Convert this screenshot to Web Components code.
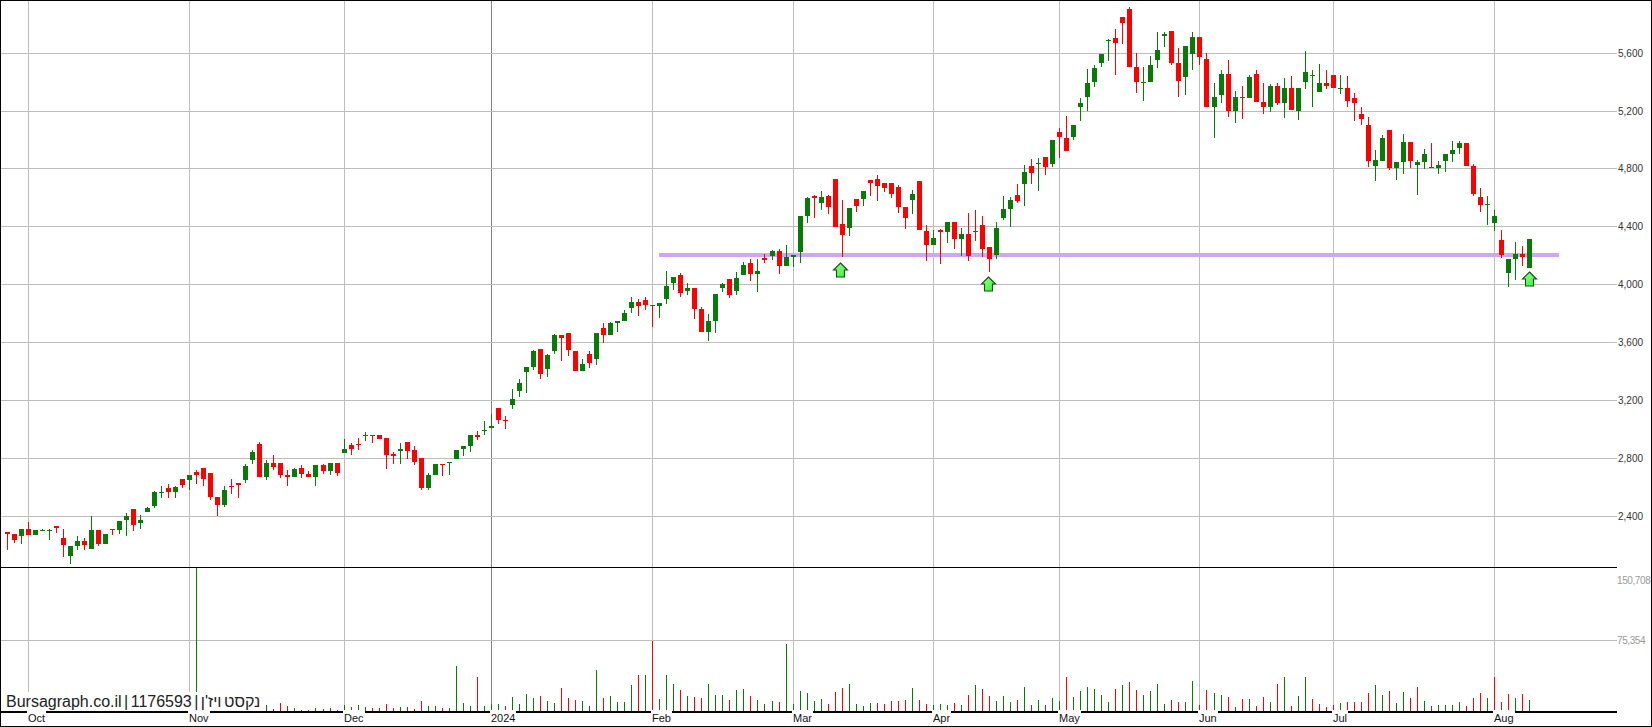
<!DOCTYPE html>
<html>
<head>
<meta charset="utf-8">
<title>Bursagraph</title>
<style>
  html, body { margin: 0; background: #fff; }
  body { font-family: "Liberation Sans", Arial, sans-serif; }
</style>
</head>
<body>
<stock-chart>
  <price-panel></price-panel>
  <volume-panel>
    <chart-caption>Bursagraph.co.il | 1176593 | נקסט ויז'ן</chart-caption>
  </volume-panel>
  <time-axis>
    <axis-tick at="28">Oct</axis-tick>
    <axis-tick at="189">Nov</axis-tick>
    <axis-tick at="344">Dec</axis-tick>
    <axis-tick at="491">2024</axis-tick>
    <axis-tick at="652">Feb</axis-tick>
    <axis-tick at="793">Mar</axis-tick>
    <axis-tick at="933">Apr</axis-tick>
    <axis-tick at="1059">May</axis-tick>
    <axis-tick at="1199">Jun</axis-tick>
    <axis-tick at="1333">Jul</axis-tick>
    <axis-tick at="1494">Aug</axis-tick>
  </time-axis>
</stock-chart>

<script>
const SVG_WIDTH = 1650;
const RIGHT_EDGE = 1617;
const MONTH_LINES = [28, 189, 344, 652, 793, 933, 1059, 1199, 1333, 1494];
const YEAR_LINE = 491;

// candle pixels, measured at 3x: colour high bodyTop bodyBottom low
const CANDLE_ROWS = [
  [490, 'r 127 127 132 180/r 132 132 150 160/g 117 117 138 162/r 96 117 135 135/g 120 120 135 135/g 117 120 123 123/g 117 120 122 150/r 108 108 114 129/r 117 144 165 201/g 168 168 198 222/g 138 153 168 180/r 144 153 165 180/g 78 120 177 177/r 120 120 162 168/g 132 132 162 162/r 117 117 120 135/g 93 93 120 132/g 69 78 90 138/r 57 57 105 123/g 75 90 99 117/g 51 54 66 66'],
  [400, 'g 273 276 318 324/g 258 276 279 294/r 252 264 276 294/g 258 261 276 294/r 237 237 255 264/g 225 225 240 270/r 210 216 225 252/r 204 204 237 258/r 219 219 291 300/r 291 291 315 348/g 258 270 315 321/r 237 258 261 282/r 249 249 255 294/g 192 198 240 249/g 150 156 180 192/r 126 132 231 231/g 180 189 231 240/r 165 189 201 210/r 189 189 225 234/r 210 225 231 258/g 204 207 231 231/r 195 204 222 234/r 213 222 231 231/g 195 195 231 258/r 192 195 213 222/g 189 189 213 225/r 189 189 219 228/g 117 147 159 159/r 129 135 147 165/r 114 132 135 150/g 96 105 108 123/r 105 105 108 129/r 105 105 117 117/r 114 114 165 207/r 156 162 168 192/g 129 147 153 192/r 126 126 153 177/r 138 150 186 195'],
  [370, 'r 264 264 354 360/g 309 315 354 360/g 282 282 315 315/r 282 282 285 318/g 276 276 279 315/g 240 240 267 267/g 228 228 236 258/g 195 195 228 246/r 183 195 201 210/g 153 180 183 195/g 132 168 174 174/r 114 114 150 162/r 138 150 153 177'],
  [240, 'g 447 477 495 507/g 417 429 453 471/g 381 381 396 459/g 330 333 381 390/r 327 327 402 417/g 342 345 387 411/g 282 285 333 342/r 285 285 294 363/r 279 279 330 348/r 333 333 393 393/g 357 372 393 393/r 333 342 369 384/g 279 279 357 375/r 249 264 285 309/g 246 249 285 285/g 243 243 249 276/g 210 219 243 243/g 171 186 204 219/r 177 186 198 228/r 171 180 195 210/r 195 195 198 261/g 189 189 198 234/g 93 138 177 192/g 111 111 129 150/r 99 105 159 171/g 129 144 153 165/r 144 144 207 237/r 201 207 276 276/g 222 243 276 303/g 162 162 243 279/g 129 132 144 156/r 117 117 165 174/g 96 114 153 165/g 66 75 105 105/r 57 69 102 123/g 57 93 102 156/r 42 54 60 69/g 30 33 48 60/r 27 33 78 102/g 15 51 78 78'],
  [0, 'g 765 765 771 801/g 648 648 756 789/g 591 594 648 669/r 585 588 594 654/g 573 591 609 630/r 585 588 621 642/r 537 537 681 681/r 600 672 705 771/g 624 624 684 708/r 597 597 618 636/g 573 573 597 618/r 540 540 549 588/r 525 537 558 603/r 549 549 564 576/r 549 549 582 594/r 555 561 621 639/r 621 621 654 687/g 570 582 600 642/r 543 543 690 690/r 675 693 735 783/g 690 714 735 735/r 687 690 696 792/g 666 666 696 729/r 666 666 717 747/g 684 702 717 768/r 639 702 768 783/r 630 693 696 723/r 648 675 747 771/r 741 741 777 816/g 666 684 765 777/g 588 627 654 660/g 591 600 627 681/r 552 585 603 609/g 495 516 552 618/r 477 498 519 552/g 474 489 492 573/r 471 471 501 525/g 420 420 492 501/r 384 396 411 474/r 348 414 453 453/g 375 375 411 420/g 294 309 321 363/g 207 249 291 333/g 195 204 246 261/g 162 162 189 201/g 117 119 122 183/r 87 114 129 225/r 51 51 69 132/r 21 27 201 201/r 159 201 246 279'],
  [30, 'g 111 156 159 213/g 78 105 156 156/g 6 60 90 114/g 6 12 18 51/r 3 3 99 105/r 54 99 153 201/g 48 48 141 195/g 6 21 72 120/r 21 21 81 105/r 69 87 231 231/g 159 201 231 324/g 120 132 195 219/r 90 132 243 261/g 183 201 243 279/r 168 201 204 267/g 135 141 204 204/r 120 132 216 216/r 159 216 231 252/g 162 168 231 246/r 159 168 219 225/g 144 174 219 264/r 138 174 240 240/g 174 174 243 270/g 63 126 156 177/g 120 135 138 231/g 102 159 186 186/r 120 159 168 177/r 135 135 174 174/g 135 174 177 192/r 138 174 213 231/r 189 204 219 273/r 231 252 267 285/r 261 285 393 411/g 360 390 408 453/g 315 324 393 393/r 300 300 414 420/g 396 396 414 450/g 312 336 396 432/r 336 336 393 414/g 390 396 405 495/g 357 372 396 417/r 339 411 414 414/g 393 405 414 432/g 372 372 393 426/g 333 360 372 396/g 333 339 354 372/r 339 339 408 408/r 402 408 492 498/r 474 501 525 546/g 498 522 525 585/g 540 558 579 603/r 600 630 675 684'],
  [170, 'g 267 267 309 351/g 216 252 267 330/r 228 252 261 288/g 207 207 294 294']
];

// bar heights in px from i = 36 on, negative = red
const VOLUME_BARS = [-7, 6, -2, -8, -5, 3, 1, -1, 3, -2, 3, -1, 6, -4, 6, 4, -3, -3, -7, -3, 4, -4, -2,
  -10, 5, 5, -3, 3, 45, 8, 5, -34, 5, 7, 7, -5, 14, 7, 17, 13, -15, 10, 8, -23, -13, -11, 10, 5, 41, -13, 15, 9, 9, 26, -36, 36, -70, 12, 36, 27, -21, 15, -14, -13, 27, 16, 16, -11, 21, 22, -15, 11, 7, 10, -9, 67, 7, 20, 18, 10, 12, -7, -19,
  -23, 27, 7, 5, 8, -8, -7, -10, -10, -11, 23, -11, -7, 6, 7, 6, -8, 6, -16, 26, -22, -15, 10, 15, 9, -11, 24, -6, 11, -6, 13, 10, -34, 14, 20, 24, 22, 16, 9, -22, 26, -29, -21, 16, 20, 27, 7, -11, -9, 9, 30, -6, -21, 18, 16, -14, 4,
  -12, 12, -5, -14, 9, -27, 34, -5, 15, 34, -12, -7, -4, -6, 8, -9, -9, -9, -18, 26, 16, -20, 8, 19, -13, -24, 10, -5, 6, 6, 6, 9, -5, -13, -18, 13, -34, -9, -17, 13, -17, 11];

const PRICE_LEVELS = [[53, '5,600'], [111, '5,200'], [168, '4,800'], [226, '4,400'], [284, '4,000'], [342, '3,600'], [400, '3,200'], [458, '2,800'], [516, '2,400']];
const ARROWS = [[840.5, 263], [988.5, 277], [1529.5, 272]];

const barColumn = i => Math.floor(7.3 + i * 7.0157);

const parseCandles = () => {
  const candles = [];
  for (const [offset, rows] of CANDLE_ROWS) {
    for (const row of rows.split('/')) {
      const [colour, ...ys] = row.split(' ');
      const [high, top, bottom, low] = ys.map(v => Math.round(offset + v / 3));
      candles.push({ colour: colour === 'r' ? '#f00' : '#087a08', high, top, bottom, low });
    }
  }
  return candles;
};

const verticalLines = (y1, y2) =>
  MONTH_LINES.map(x => `<rect x="${x}" y="${y1}" width="1" height="${y2 - y1}" fill="#bdbdb9"/>`).join('') +
  `<rect x="${YEAR_LINE}" y="${y1}" width="1" height="${y2 - y1}" fill="#868686"/>`;

class StockChart extends HTMLElement {
  constructor() {
    super();
    this.attachShadow({ mode: 'open' });
    this.shadowRoot.innerHTML = `
      <style>
        :host {
          display: flex;
          flex-direction: column;
          box-sizing: border-box;
          width: 1652px;
          height: 727px;
          border: 1px solid #000;
          background: #fff;
          overflow: hidden;
        }
      </style>
      <slot></slot>
    `;
  }
}

class PricePanel extends HTMLElement {
  constructor() {
    super();
    this.attachShadow({ mode: 'open' });
    const grid = PRICE_LEVELS.map(([y, label]) => `
      <rect x="1" y="${y}" width="${RIGHT_EDGE - 1}" height="1" fill="#bdbdb9"/>
      <text x="1618" y="${y + 4}">${label}</text>`).join('');

    const candles = parseCandles().map((c, i) => {
      const x = barColumn(i);
      return `<rect x="${x}" y="${c.high}" width="1" height="${Math.max(c.low - c.high, 1)}" fill="${c.colour}"/>
        <rect x="${x - 2}" y="${c.top}" width="5" height="${Math.max(c.bottom - c.top, 1)}" fill="${c.colour}"/>`;
    }).join('');

    const arrows = ARROWS.map(([x, y]) =>
      `<path class="arrow" d="M${x} ${y}l7 7h-3v7h-8v-7h-3z"/>`).join('');

    this.shadowRoot.innerHTML = `
      <style>
        :host { display: block; flex: none; height: 566px; }
        svg { display: block; }
        rect { shape-rendering: crispEdges; }
        text { font: 10px "Liberation Sans", Arial, sans-serif; fill: #333; }
        .arrow { fill: url(#arrow-fill); stroke: #124f12; stroke-width: 1.1; stroke-linejoin: miter; }
      </style>
      <svg width="${SVG_WIDTH}" height="566" viewBox="1 1 ${SVG_WIDTH} 566">
        <defs>
          <linearGradient id="arrow-fill" x1="0" y1="0" x2="1" y2="1">
            <stop offset="0" stop-color="#9dff8f"/>
            <stop offset="1" stop-color="#35f035"/>
          </linearGradient>
        </defs>
        ${verticalLines(1, 567)}
        ${grid}
        <rect x="659" y="253" width="900" height="4" fill="#cfa6fb"/>
        ${candles}
        ${arrows}
      </svg>
    `;
  }
}

class VolumePanel extends HTMLElement {
  constructor() {
    super();
    this.attachShadow({ mode: 'open' });
    const bars = VOLUME_BARS.map((h, k) =>
      `<rect x="${barColumn(k + 36)}" y="${711 - Math.abs(h)}" width="1" height="${Math.abs(h)}" fill="${h < 0 ? '#f00' : '#087a08'}"/>`).join('');
    this.shadowRoot.innerHTML = `
      <style>
        :host { display: block; flex: none; position: relative; height: 146px; }
        svg { display: block; }
        rect { shape-rendering: crispEdges; }
        text { font: 10px "Liberation Sans", Arial, sans-serif; fill: #9a9a9a; letter-spacing: -.4px; }
      </style>
      <svg width="${SVG_WIDTH}" height="146" viewBox="1 567 ${SVG_WIDTH} 146">
        ${verticalLines(568, 711)}
        <rect x="1" y="640" width="${RIGHT_EDGE - 1}" height="1" fill="#bdbdb9"/>
        <rect x="${barColumn(27)}" y="568" width="1" height="143" fill="#087a08"/>
        ${bars}
        <rect x="1" y="567" width="${RIGHT_EDGE - 1}" height="1" fill="#000"/>
        <rect x="1" y="711" width="${RIGHT_EDGE - 1}" height="2" fill="#000"/>
        <text x="1617" y="584">150,708</text>
        <text x="1617" y="644">75,354</text>
      </svg>
      <slot></slot>
    `;
  }
}

class ChartCaption extends HTMLElement {
  constructor() {
    super();
    this.attachShadow({ mode: 'open' });
    this.shadowRoot.innerHTML = `
      <style>
        :host {
          position: absolute;
          left: 4px;
          bottom: 2px;
          height: 19px;
          padding: 0 1px;
          background: #fff;
          color: #222;
          font: 16px/19px "Liberation Sans", Arial, sans-serif;
          word-spacing: -2px;
          white-space: nowrap;
        }
      </style>
      <slot></slot>
    `;
  }
}

class TimeAxis extends HTMLElement {
  constructor() {
    super();
    this.attachShadow({ mode: 'open' });
    this.shadowRoot.innerHTML = `
      <style>
        :host { display: block; flex: none; position: relative; height: 13px; }
      </style>
      <slot></slot>
    `;
  }
}

class AxisTick extends HTMLElement {
  constructor() {
    super();
    this.attachShadow({ mode: 'open' });
    this.shadowRoot.innerHTML = `
      <style>
        :host {
          position: absolute;
          top: -3px;
          height: 16px;
          padding: 0 1px;
          background: #fff;
          color: #111;
          font: 11px/17px "Liberation Sans", Arial, sans-serif;
        }
      </style>
      <slot></slot>
    `;
  }

  connectedCallback() {
    this.style.left = `${Number(this.getAttribute('at')) - 2}px`;
  }
}

customElements.define('stock-chart', StockChart);
customElements.define('price-panel', PricePanel);
customElements.define('volume-panel', VolumePanel);
customElements.define('chart-caption', ChartCaption);
customElements.define('time-axis', TimeAxis);
customElements.define('axis-tick', AxisTick);
</script>
</body>
</html>
